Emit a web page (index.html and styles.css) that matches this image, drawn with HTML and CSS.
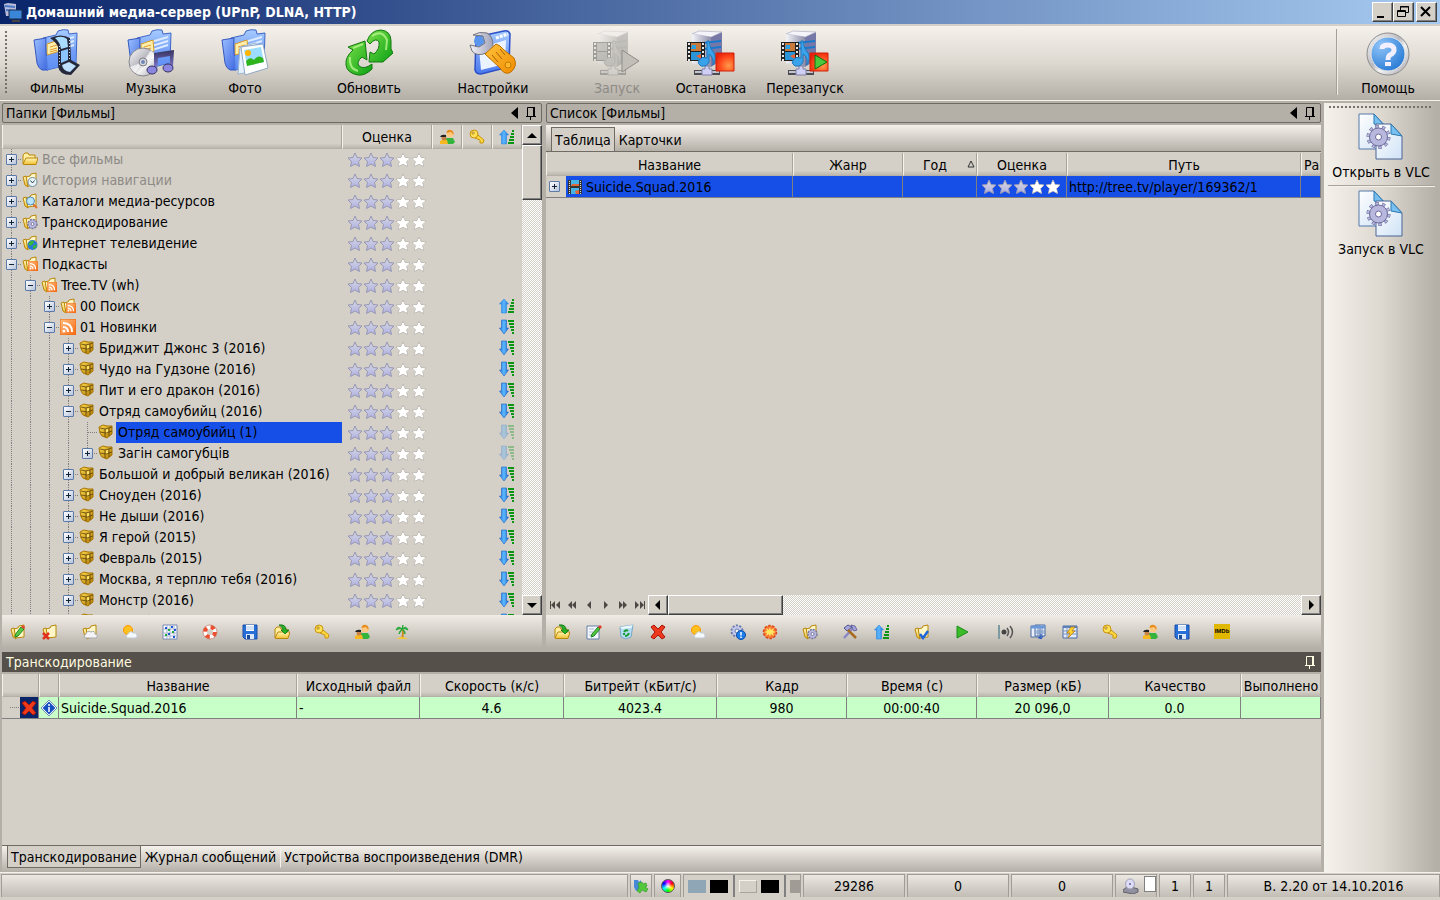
FILE: index.html
```html
<!DOCTYPE html>
<html lang="ru">
<head>
    <meta charset="UTF-8">
    <meta name="viewport" content="width=device-width, initial-scale=1.0">
    <title>Домашний медиа-сервер (UPnP, DLNA, HTTP)</title>
    <link rel="stylesheet" href="styles.css">
</head>
<body>

<!-- Общий набор иконок -->
<svg class="sprite" aria-hidden="true">
    <defs>
        <linearGradient id="gBlue" x1="0" y1="0" x2="0" y2="1"><stop offset="0" stop-color="#a8ccff"/><stop offset="1" stop-color="#4a78ee"/></linearGradient>
        <linearGradient id="gBlue2" x1="0" y1="0" x2="1" y2="1"><stop offset="0" stop-color="#9cc0ff"/><stop offset="1" stop-color="#3c66e0"/></linearGradient>
        <linearGradient id="gGreen" x1="0" y1="0" x2="1" y2="1"><stop offset="0" stop-color="#7be04a"/><stop offset="1" stop-color="#0aa014"/></linearGradient>
        <linearGradient id="gGrey" x1="0" y1="0" x2="1" y2="0"><stop offset="0" stop-color="#f4f4fa"/><stop offset="1" stop-color="#8e8fa8"/></linearGradient>
        <linearGradient id="gDisc" x1="0" y1="0" x2="1" y2="1"><stop offset="0" stop-color="#ffffff"/><stop offset="0.45" stop-color="#b9b9c0"/><stop offset="0.6" stop-color="#f4f4f4"/><stop offset="1" stop-color="#a0a0a8"/></linearGradient>
        <linearGradient id="gNote" x1="0" y1="0" x2="0" y2="1"><stop offset="0" stop-color="#35325c"/><stop offset="1" stop-color="#8d86e0"/></linearGradient>
        <radialGradient id="gRed" cx="0.7" cy="0.7" r="0.8"><stop offset="0" stop-color="#ff9a4a"/><stop offset="0.6" stop-color="#ff4a1c"/><stop offset="1" stop-color="#e8200c"/></radialGradient>
        <radialGradient id="gHelp" cx="0.3" cy="0.25" r="0.9"><stop offset="0" stop-color="#90c4f8"/><stop offset="1" stop-color="#1e74d2"/></radialGradient>
        <linearGradient id="gOrange" x1="0" y1="0" x2="1" y2="1"><stop offset="0" stop-color="#ffc23c"/><stop offset="1" stop-color="#f08c00"/></linearGradient>
        <linearGradient id="gGold" x1="0" y1="0" x2="0" y2="1"><stop offset="0" stop-color="#fff6b8"/><stop offset="1" stop-color="#f0c030"/></linearGradient>
        <linearGradient id="gDoc" x1="0" y1="0" x2="1" y2="1"><stop offset="0" stop-color="#ffffff"/><stop offset="1" stop-color="#cfe2f6"/></linearGradient>
        <linearGradient id="gStar" x1="0" y1="0" x2="0" y2="1"><stop offset="0" stop-color="#d8d8e2"/><stop offset="1" stop-color="#aeb0e2"/></linearGradient>
        <linearGradient id="gArrow" x1="0" y1="0" x2="1" y2="0"><stop offset="0" stop-color="#2a80e0"/><stop offset="0.5" stop-color="#5cb8ff"/><stop offset="1" stop-color="#1c6cd0"/></linearGradient>
        <linearGradient id="gRss" x1="0" y1="0" x2="1" y2="1"><stop offset="0" stop-color="#ffc080"/><stop offset="1" stop-color="#f86a14"/></linearGradient>
        <linearGradient id="gChest" x1="0" y1="0" x2="1" y2="1"><stop offset="0" stop-color="#ffdc50"/><stop offset="1" stop-color="#b07800"/></linearGradient>
    </defs>

    <!-- большие иконки 48x48 -->
    <symbol id="bigFolder" viewBox="0 0 48 48">
        <path d="M10 9 23 6 25 2 Q30 0 35 1 L36 5 44 4 43 34 14 41Z" fill="url(#gBlue)" stroke="#3d66c8"/>
        <path d="M24 13 41 8M25 17 41 12M25 21 41 16" stroke="#dcebff" stroke-width="2"/>
        <path d="M14 15 26 11 27 22 14 26Z" fill="#ffefad" stroke="#d69a20"/>
        <path d="M17 18 24 16M17 21 24 19M17 23 24 21" stroke="#e09a30"/>
        <path d="M1 11 13 9 Q12 22 15 41 L9 41 Q5 39 4 34Z" fill="url(#gBlue2)" stroke="#3558c0"/>
        <path d="M13 27 Q28 22 43 21 L43 34 14 41Z" fill="#6d9cf8" opacity=".6"/>
    </symbol>
    <symbol id="films" viewBox="0 0 48 48">
        <use href="#bigFolder"/>
        <path d="M17 9 Q28 4 37 9 L38 31 47 36 38 46 Q26 46 25 37 L25 18 Q23 13 17 9Z" fill="#24283a"/>
        <path d="M22 9 Q29 6 34 10 L35 18 28 20 Q27 13 22 9Z" fill="#a9dcff"/>
        <path d="M28 22 35 20 35 31 28 34Z" fill="#8cc4ff"/>
        <path d="M29 36 36 33 43 37 37 43 Q30 42 29 36Z" fill="#bfe0ff"/>
        <path d="M26.500 17V37M36.500 11V31" stroke="#d0dcf0" stroke-dasharray="1 2"/>
    </symbol>
    <symbol id="music" viewBox="0 0 48 48">
        <use href="#bigFolder"/>
        <circle cx="16" cy="33" r="14" fill="url(#gDisc)" stroke="#85858c"/>
        <path d="M16 33 24 21 A14 14 0 0 1 29 28ZM16 33 8 44 A14 14 0 0 1 3 38Z" fill="#fff" opacity=".7"/>
        <circle cx="16" cy="33" r="4" fill="#d8d8de" stroke="#7d7d86"/><circle cx="16" cy="33" r="2" fill="#6f88b8"/>
        <path d="M27 24 47 21 46 38 43 38 43 27 31 29 30 42 27 42Z" fill="url(#gNote)"/>
        <ellipse cx="25" cy="41" rx="5" ry="4" fill="#8d86e0" stroke="#35325c"/><ellipse cx="41" cy="39" rx="5" ry="4" fill="#8d86e0" stroke="#35325c"/>
    </symbol>
    <symbol id="photo" viewBox="0 0 48 48">
        <use href="#bigFolder"/>
        <path d="M19 18 35 14 37 42 17 45Z" fill="#e4f0fc" stroke="#9ab4d0"/>
        <path d="M20 18 42 15 47 39 24 46Z" fill="#fff" stroke="#90a8c4"/>
        <path d="M23 21 40 18 43 33 26 37Z" fill="#9cdcfc"/>
        <path d="M25 32 Q29 27 33 31 Q37 25 42 29 L43 33 26 37Z" fill="#30b41c"/>
        <circle cx="27" cy="24" r="3" fill="#ffb400"/>
    </symbol>
    <symbol id="refresh" viewBox="0 0 48 48">
        <g fill="url(#gGreen)" stroke="#11780e" stroke-linejoin="round">
            <path d="M3 18 20 12 22 31 17 28 Q11 33 14 37 Q19 41 27 35 L27 40 Q20 47 13 46 Q2 44 1 36 Q0 28 8 21Z"/>
            <path d="M22 12 Q26 1 36 1 Q46 2 46 12 L46 20 48 24 38 33 24 33 25 23 29 25 Q35 20 34 13 Q31 8 25 15Z"/>
        </g>
        <path d="M5 28Q4 40 13 42M27 7Q37 0 42 11L41 21M8 19 18 15" fill="none" stroke="#b5f58c" stroke-width="2" opacity=".8"/>
    </symbol>
    <symbol id="settings" viewBox="0 0 48 48">
        <path d="M7 8 35 2 Q40 1 41 5 L40 38 12 45 Q7 45 6 41Z" fill="url(#gBlue)" stroke="#2c50c8" stroke-width="1.500"/>
        <path d="M10 19 37 11 36 35 12 41Z" fill="#eaf3ff"/>
        <path d="M27 9 39 5" stroke="#fff" stroke-width="3" stroke-dasharray="3 1"/>
        <circle cx="10" cy="12" r="5" fill="#5a96f0"/>
        <path d="M4 6 Q10 2 18 4 Q24 7 24 17 L29 22 21 30 17 24 Q8 28 3 22 L1 16 10 18 16 14 14 7Z" fill="url(#gGrey)" stroke="#74747c"/>
        <path d="M16 25 27 15 Q31 16 35 21 L45 29 Q49 37 42 43 Q36 47 31 39Z" fill="url(#gOrange)" stroke="#bd7200"/>
        <path d="M23 26 29 33M27 23 33 30M31 20 36 26" stroke="#a96000"/>
        <circle cx="39" cy="36" r="3" fill="#ffb72c" stroke="#c27a00"/>
    </symbol>
    <symbol id="server" viewBox="0 0 48 48">
        <path d="M5 5 12 2 35 3 35 31 24 38 5 34Z" fill="#dcdce6"/>
        <path d="M24 8 35 3 35 31 24 38Z" fill="#7678a8"/>
        <path d="M5 5 12 2 35 3 24 8Z" fill="#f4f4fa" stroke="#a8a8bc" stroke-width=".6"/>
        <path d="M5 5 24 8 24 38 5 34Z" fill="url(#gGrey)"/>
        <path d="M16 14 34 12M16 20 34 18" stroke="#1a78cc" stroke-width="2"/>
        <path d="M0 13H18V32H0Z" fill="#222"/>
        <path d="M4 14H14V22H4Z" fill="#c87a3c"/><path d="M4 23H14V31H4Z" fill="#2a94d8"/>
        <path d="M5 16H9V20H4Z" fill="#2aa0e4"/><path d="M9 27 14 25V30Z" fill="#f06030"/>
        <path d="M2 14V32M16 14V32" stroke="#e8e8e8" stroke-width="2" stroke-dasharray="2 2"/>
        <path d="M7 41H33V46H7Z" fill="#4c4c54"/><path d="M8 43H32" stroke="#c4c4cc" stroke-width="2"/>
        <path d="M18 37H22V40H25V46H15V40H18Z" fill="#cfcff4" stroke="#8080a8"/>
        <path d="M20 12 22 12 Q23 20 27 24 Q30 29 26 36 Q27 28 22 25 L22 33 Q20 38 14 37 Q10 35 12 31 Q15 27 20 29Z" fill="#3aa2ea" stroke="#1c78bc"/>
    </symbol>
    <symbol id="serverStart" viewBox="0 0 48 48"><g class="faded"><use href="#server"/></g><path d="M29 21 46 32 29 43Z" fill="#c2bfb8" stroke="#8f8c86"/></symbol>
    <symbol id="serverStop" viewBox="0 0 48 48"><use href="#server"/><path d="M29 24H47V42H29Z" fill="url(#gRed)" stroke="#d02008"/></symbol>
    <symbol id="serverRestart" viewBox="0 0 48 48"><use href="#server"/><path d="M29 24H47V42H29Z" fill="url(#gRed)" stroke="#d02008"/><path d="M34 26 46 33 34 40Z" fill="#4cc83c" stroke="#0c7010"/></symbol>
    <symbol id="help" viewBox="0 0 48 48">
        <circle cx="24" cy="25" r="21" fill="url(#gDisc)" stroke="#8d8d8d"/>
        <circle cx="24" cy="25" r="17" fill="url(#gHelp)" stroke="#e8e8e8"/>
        <path d="M18 20Q18 16 23.500 16Q30 16 30 21Q30 24 26 26Q24 27 24 31" fill="none" stroke="#f2f0ff" stroke-width="5"/>
        <path d="M21 33H27V37H21Z" fill="#f2f0ff"/>
    </symbol>
    <symbol id="vlcDoc" viewBox="0 0 48 48">
        <path d="M2 1H17L28 13V36H2Z" fill="url(#gDoc)" stroke="#5578a8"/>
        <path d="M17 1 28 13 17 11Z" fill="#78c0f0" stroke="#2a78b0"/>
        <path d="M19 11H34L45 23V46H19Z" fill="url(#gDoc)" stroke="#4a6496"/>
        <path d="M34 11 45 23 34 21Z" fill="#78c0f0" stroke="#2a78b0"/>
        <circle cx="21.500" cy="24" r="10.500" fill="none" stroke="#6a6898" stroke-width="3" stroke-dasharray="3.300 3.300"/>
        <circle cx="21.500" cy="24" r="9" fill="#b8b8de" stroke="#6a6898"/>
        <circle cx="21.500" cy="24" r="10.500" fill="none" stroke="#b8b8de" stroke-width="2" stroke-dasharray="2.300 4.300" stroke-dashoffset="-.5"/>
        <circle cx="21.500" cy="24" r="3" fill="#fff" stroke="#6a6898"/>
    </symbol>

    <!-- маленькие иконки 16x16 -->
    <symbol id="app" viewBox="0 0 20 20">
        <path d="M1 2 5 1 13 2V14H3Z" fill="#b8bcd8"/><path d="M2 4 12 5M3 8 12 9" stroke="#4a78c8" stroke-width="2"/><path d="M6 8H19V17H6Z" fill="#3a86d8" stroke="#1c2c50"/><path d="M9 19H17" stroke="#444" stroke-width="2"/>
    </symbol>
    <symbol id="star" viewBox="0 0 16 16"><path d="M8 1 10 5.500 15 6 11.500 9.500 12.500 14.500 8 12 3.500 14.500 4.500 9.500 1 6 6 5.500Z"/></symbol>
    <symbol id="stars" viewBox="0 0 80 16">
        <g fill="url(#gStar)" stroke="#9898b4"><use href="#star" width="16" height="16"/><use href="#star" x="16" width="16" height="16"/><use href="#star" x="32" width="16" height="16"/></g>
        <g fill="#fff" stroke="#bdbab5"><use href="#star" x="48" width="16" height="16"/><use href="#star" x="64" width="16" height="16"/></g>
        <path d="M56 3 57.500 6.500 61.500 7 58.500 9.500 59.500 13 56 11 52.500 13 53.500 9.500 50.500 7 54.500 6.500ZM72 3 73.500 6.500 77.500 7 74.500 9.500 75.500 13 72 11 68.500 13 69.500 9.500 66.500 7 70.500 6.500Z" fill="#fff" stroke="#fff"/>
    </symbol>
    <symbol id="openFolder" viewBox="0 0 16 16"><path d="M1 13V4L3 2H6L7 4H13V7" fill="#ffeea0" stroke="#b8860b"/><path d="M1 13 4 7H16L14 13.500H2Z" fill="url(#gGold)" stroke="#b8860b"/></symbol>
    <symbol id="folder" viewBox="0 0 16 16"><path d="M4 5 8 4 9 2 14 1V13L5 14Z" fill="#fff7c8" stroke="#b8860b"/><path d="M1 5 4 4 6 15 3 13Z" fill="url(#gGold)" stroke="#b8860b"/></symbol>
    <symbol id="folderTime" viewBox="0 0 16 16"><use href="#folder"/><circle cx="10.500" cy="10" r="4.500" fill="#e8f4f8" stroke="#6c8ca0"/><path d="M8.500 8.500 10.500 11 12.500 8.500" fill="none" stroke="#345"/></symbol>
    <symbol id="folderFind" viewBox="0 0 16 16"><use href="#folder"/><path d="M11 11 15 15" stroke="#e07030" stroke-width="2"/><circle cx="8.500" cy="8" r="4" fill="#b8e4fc" stroke="#5088b8"/></symbol>
    <symbol id="folderGear" viewBox="0 0 16 16"><use href="#folder"/><circle cx="10.500" cy="10" r="4.500" fill="#b9b9e0" stroke="#77779c" stroke-width="1.500" stroke-dasharray="2 1"/><circle cx="10.500" cy="10" r="1.500" fill="#fff" stroke="#77779c"/></symbol>
    <symbol id="folderWeb" viewBox="0 0 16 16"><use href="#folder"/><circle cx="10.500" cy="10" r="5" fill="#2a78d8"/><path d="M6 9Q9 4 12 6L11 9 8 11ZM11 11 15 9 14 13 11 14Z" fill="#38b838"/></symbol>
    <symbol id="rssBox" viewBox="0 0 16 16"><path d="M0 0H16V16H0Z" fill="url(#gRss)" stroke="#e86810"/><g fill="none" stroke="#fff" stroke-width="2"><path d="M3 8Q8 8 8 13M3 4Q12 4 12 13"/></g><circle cx="4" cy="12" r="1.500" fill="#fff"/></symbol>
    <symbol id="folderRss" viewBox="0 0 16 16"><use href="#folder"/><use href="#rssBox" x="6" y="5" width="10" height="10"/></symbol>
    <symbol id="chest" viewBox="0 0 16 16"><path d="M1 3 5 1 9 2 14 2 14 10 9 14 4 12 2 9Z" fill="url(#gChest)" stroke="#a87400"/><path d="M2 4 7 5 14 3M7 5V13M2 8 8 9 14 7M11 4V12" fill="none" stroke="#5c430c" stroke-width=".8"/><path d="M8 5.500 10 5V8L8 8.500Z" fill="#ffe468"/></symbol>
    <symbol id="sortUp" viewBox="0 0 16 16"><path d="M5 1 9.500 6H7.500V15H2.500V6H.5Z" fill="url(#gArrow)" stroke="#2a88e0" stroke-width=".6"/><path d="M13 2H15M12 5H15M11 8H15M10 11H15M9 14H15" stroke="#0c9414" stroke-width="2"/></symbol>
    <symbol id="sortDown" viewBox="0 0 16 16"><path d="M2.500 1H7.500V9H9.500L5 15 .5 9H2.500Z" fill="url(#gArrow)" stroke="#1c60c0" stroke-width=".6"/><path d="M9 2H15M10 5H15M11 8H15M12 11H15M13 14H15" stroke="#0c9414" stroke-width="2"/></symbol>
    <symbol id="users" viewBox="0 0 16 16"><path d="M6 15 7 9H14L16 13 14 15Z" fill="#34b43c"/><circle cx="11" cy="5" r="3.500" fill="#ffc880"/><path d="M7.500 4Q8 0 12 1 15 2 14.500 6L12 3Z" fill="#e88c1c"/><path d="M1 15V12L3 11H8L9 15Z" fill="#f8b820"/><circle cx="5" cy="9" r="2.500" fill="#c88448"/><path d="M1 8Q2 5 7 6L7 8 4 8Z" fill="#222"/></symbol>
    <symbol id="key" viewBox="0 0 16 16"><path d="M6 9 9 6 15 11 14 14 11 14 11 11Z" fill="#ffd840" stroke="#c89410"/><circle cx="5" cy="5" r="4" fill="#ffe258" stroke="#c89410"/><circle cx="4" cy="4" r="1.200" fill="#c8c4bc" stroke="#c89410"/></symbol>
    <symbol id="folderEdit" viewBox="0 0 16 16"><use href="#folder"/><path d="M5 11 11 3 14 5 8 12 5 13Z" fill="#58cc48" stroke="#208020"/><path d="M11 3 13 1 15 3 14 5Z" fill="#e84830"/></symbol>
    <symbol id="folderDel" viewBox="0 0 16 16"><use href="#folder"/><path d="M1 9 7 15M7 9 1 15" stroke="#e03020" stroke-width="2.500"/></symbol>
    <symbol id="folderCloud" viewBox="0 0 16 16"><use href="#folder"/><path d="M3 14Q1 11 4 10 5 6 9 8 13 6 13 10 17 11 14 14Z" fill="#f4f4f8" stroke="#aaa"/></symbol>
    <symbol id="weather" viewBox="0 0 16 16"><circle cx="6" cy="6" r="4.500" fill="#ffc020" stroke="#ff9800"/><path d="M5 14Q3 11 6 10 8 6 11 9 15 8 15 11 16 14 13 14Z" fill="#f4f8ff" stroke="#c4c8d0"/></symbol>
    <symbol id="grid" viewBox="0 0 16 16"><path d="M1 1H15V15H1Z" fill="#fff" stroke="#7888b0"/><path d="M1 5H15M1 9H15M1 12H15M5 1V15M8 1V15M12 1V15" stroke="#a8b4d0"/><path d="M3 3H5V5H3ZM9 2H11V4H9ZM6 9H8V11H6ZM12 5H14V7H12ZM11 12H13V14H11Z" fill="#2058d8"/><path d="M6 5H8V7H6ZM10 7H12V9H10ZM3 10H5V12H3Z" fill="#28a838"/></symbol>
    <symbol id="ring" viewBox="0 0 16 16"><circle cx="8" cy="8" r="5" fill="none" stroke="#fff" stroke-width="4"/><circle cx="8" cy="8" r="5" fill="none" stroke="#ec5030" stroke-width="4" stroke-dasharray="4 3.850"/><circle cx="8" cy="8" r="7" fill="none" stroke="#c06048" stroke-width=".6"/></symbol>
    <symbol id="floppy" viewBox="0 0 16 16"><path d="M1 1H15V15H3L1 13Z" fill="#2870d8" stroke="#1a4ca8"/><path d="M4 1H12V7H4Z" fill="#fff"/><path d="M4 3H12M4 5H12" stroke="#a8c4e8"/><path d="M4 10H12V15H4Z" fill="#dce8f8"/><path d="M5 11H8V15H5Z" fill="#1c4c98"/></symbol>
    <symbol id="folderIn" viewBox="0 0 16 16"><use href="#openFolder" y="1"/><path d="M5 1Q12 0 12 6H15L11 10 7 6H9Q9 3 5 1Z" fill="#28b028" stroke="#0c7410" stroke-width=".8"/></symbol>
    <symbol id="palm" viewBox="0 0 16 16"><path d="M8 5Q10 9 8 14" fill="none" stroke="#c88c28" stroke-width="2"/><path d="M8 5Q4 1 2 6 5 4 8 5 5 7 5 10 7 7 8 5 12 1 14 6 11 4 8 5 12 7 11 10 10 7 8 5L9 1Z" fill="#28a838" stroke="#28a838"/><path d="M2 15Q8 11 14 15Z" fill="#f4c830"/></symbol>
    <symbol id="docEdit" viewBox="0 0 16 16"><path d="M1 2H13V15H1Z" fill="#f4f8ff" stroke="#6880a8"/><path d="M3 5H8M3 8H7M3 11H6" stroke="#a8b8d0"/><path d="M5 13 6 10 12 3 14 5 8 12Z" fill="#50c840" stroke="#208020"/><path d="M12 3 14 1 16 3 14 5Z" fill="#e03828"/></symbol>
    <symbol id="recycle" viewBox="0 0 16 16"><path d="M2 3 15 1 13 13 8 15 3 13Z" fill="#b4dcf4" stroke="#78a8c8"/><path d="M2 3 15 1 13 4 4 5Z" fill="#eaf8ff"/><path d="M6 8Q8 5 10 7M11 9Q10 12 7 12M6 11V9" fill="none" stroke="#1c9c30" stroke-width="2"/></symbol>
    <symbol id="cross" viewBox="0 0 16 16"><path d="M1 3 4 1 8 5 12 1 15 3 11 8 15 13 12 15 8 11 4 15 1 13 5 8Z" fill="#ee3a1c" stroke="#a81408"/></symbol>
    <symbol id="gearInfo" viewBox="0 0 16 16"><circle cx="7" cy="7" r="5.500" fill="#c4c8e8" stroke="#6878b0" stroke-width="2" stroke-dasharray="2 1.450"/><circle cx="7" cy="7" r="4.500" fill="#c4c8e8"/><circle cx="7" cy="7" r="2" fill="#fff" stroke="#6878b0"/><circle cx="11" cy="11" r="4.500" fill="#1c7ce8" stroke="#0c50a8"/><path d="M11 8V11.500M11 12.500V14" stroke="#fff" stroke-width="1.500"/></symbol>
    <symbol id="burst" viewBox="0 0 16 16"><circle cx="8" cy="8" r="6.500" fill="#f87838" stroke="#d84818" stroke-width="1.500" stroke-dasharray="2.500 1.500"/><path d="M8 3 9 6 12 4 11 7 14 8 11 9 12 12 9 10 8 13 7 10 4 12 5 9 2 8 5 7 4 4 7 6Z" fill="#ffe860"/></symbol>
    <symbol id="tools" viewBox="0 0 16 16"><path d="M2 14 11 4" stroke="#8888c8" stroke-width="2.500"/><path d="M9 1 13 2 15 6 12 7Z" fill="#a8a8dc" stroke="#6868a0"/><path d="M2 4 6 1 10 3 5 7Z" fill="#a8a8dc" stroke="#50508c"/><path d="M6 6 14 14" stroke="#a86c20" stroke-width="2.500"/></symbol>
    <symbol id="folderOk" viewBox="0 0 16 16"><use href="#folder"/><path d="M6 10 9 14 14 7" fill="none" stroke="#1c64d8" stroke-width="2.500"/></symbol>
    <symbol id="play" viewBox="0 0 16 16"><path d="M3 2 14 8 3 14Z" fill="#3cbc28" stroke="#1c8c18"/></symbol>
    <symbol id="sound" viewBox="0 0 16 16"><path d="M1 1V15" stroke="#7a9ca0" stroke-width="2"/><circle cx="6" cy="8" r="2.500" fill="#444"/><path d="M9 4Q12 8 9 12M12 2Q17 8 12 14" fill="none" stroke="#555" stroke-width="1.500"/></symbol>
    <symbol id="tableDown" viewBox="0 0 16 16"><path d="M1 2H10V13H1ZM5 1H15V12H5Z" fill="#eaf0fc" stroke="#4868a0"/><path d="M1 3H15" stroke="#6c98d8" stroke-width="3"/><path d="M5 7H15M5 9H15M8 4V12M12 4V12" stroke="#7894c0"/><path d="M8 14H11V10M9 13 11 15 13 12" fill="none" stroke="#1c50c0"/></symbol>
    <symbol id="tableFlash" viewBox="0 0 16 16"><path d="M1 2H15V14H1Z" fill="#e4ecfa" stroke="#4868a0"/><path d="M1 3H15" stroke="#5880b8" stroke-width="2"/><path d="M1 7H15M1 10H15M5 3V14" stroke="#7894c0"/><path d="M9 3 13 3 10 7H13L6 14 8 9H5Z" fill="#ffd430" stroke="#b87818" stroke-width=".8"/></symbol>
    <symbol id="filmClip" viewBox="0 0 16 16"><path d="M1 1H15V15H1Z" fill="#333"/><path d="M4 1H12V7H4ZM4 9H12V15H4Z" fill="#48b4e4"/><path d="M5 5H12V7H4ZM8 12 12 11V15H9Z" fill="#e06838"/><path d="M2.500 2V15M13.500 2V15" stroke="#ddd" stroke-dasharray="1 1"/></symbol>
    <symbol id="info" viewBox="0 0 16 16"><path d="M8 0 16 8 8 16 0 8Z" fill="#fff" stroke="#7090b8"/><path d="M8 3 13 8 8 13 3 8Z" fill="#1850c0" stroke="#1850c0" stroke-width="2"/><path d="M8 4V6M8 7V12" stroke="#fff" stroke-width="1.500"/></symbol>
    <symbol id="puzzle" viewBox="0 0 16 16"><path d="M1 2H5L6 4 8 2V10L3 13 1 9Z" fill="#4888d8"/><path d="M5 5 9 4 10 6 13 5 14 8 12 9 15 11 13 14 9 12 7 15 4 13 6 10Z" fill="#54c83c" stroke="#289420" stroke-width=".6"/></symbol>
    <symbol id="cdDrive" viewBox="0 0 16 16"><path d="M0 12 5 8 15 11V14L10 16 0 14Z" fill="#9090a0" stroke="#606068"/><ellipse cx="7" cy="6" rx="4.500" ry="5" fill="#dcdcf4" stroke="#a0a0b8"/><circle cx="7" cy="6" r="1" fill="#6860a0"/></symbol>
    <symbol id="pin" viewBox="0 0 12 14"><path d="M2.500 10V1.500H8.500M1 10.500H11M5.500 10V14" fill="none" stroke="currentColor"/><path d="M9 1V10" stroke="currentColor" stroke-width="2"/></symbol>
    <symbol id="back" viewBox="0 0 12 14"><path d="M9 1V13L2 7Z" fill="currentColor"/></symbol>
    <symbol id="triUp" viewBox="0 0 10 10"><path d="M0 8H10L5 3Z"/></symbol>
    <symbol id="triDown" viewBox="0 0 10 10"><path d="M0 3H10L5 8Z"/></symbol>
    <symbol id="triLeft" viewBox="0 0 10 10"><path d="M7 0V10L2 5Z"/></symbol>
    <symbol id="triRight" viewBox="0 0 10 10"><path d="M3 0V10L8 5Z"/></symbol>
    <symbol id="nFirst" viewBox="0 0 10 10"><path d="M0 1H1V9H0ZM5 1V9L1 5ZM10 1V9L6 5Z"/></symbol>
    <symbol id="nPrevs" viewBox="0 0 10 10"><path d="M5 1V9L1 5ZM9 1V9L5 5Z"/></symbol>
    <symbol id="nPrev" viewBox="0 0 10 10"><path d="M7 1V9L3 5Z"/></symbol>
    <symbol id="nNext" viewBox="0 0 10 10"><path d="M3 1V9L7 5Z"/></symbol>
    <symbol id="nNexts" viewBox="0 0 10 10"><path d="M1 1V9L5 5ZM5 1V9L9 5Z"/></symbol>
    <symbol id="nLast" viewBox="0 0 10 10"><path d="M0 1V9L4 5ZM5 1V9L9 5ZM9 1H10V9H9Z"/></symbol>
</svg>

<header class="titlebar">
    <svg class="app-icon"><use href="#app"/></svg>
    <h1>Домашний медиа-сервер (UPnP, DLNA, HTTP)</h1>
    <button class="win-btn" aria-label="Свернуть"><svg viewBox="0 0 16 16"><path d="M3 13H10" stroke="#000" stroke-width="2"/></svg></button>
    <button class="win-btn" aria-label="Восстановить"><svg viewBox="0 0 16 16"><path d="M5.500 7V2.500H13.500V8.500H11M5 3H14M2.500 6.500H10.500V12.500H2.500ZM2 7.500H11" fill="none" stroke="#000"/></svg></button>
    <button class="win-btn close" aria-label="Закрыть"><svg viewBox="0 0 16 16"><path d="M3 3 12 12M12 3 3 12" stroke="#000" stroke-width="2"/></svg></button>
</header>

<nav class="main-toolbar">
    <span class="grip"></span>
    <button class="big-btn"><svg><use href="#films"/></svg>Фильмы</button>
    <button class="big-btn"><svg><use href="#music"/></svg>Музыка</button>
    <button class="big-btn"><svg><use href="#photo"/></svg>Фото</button>
    <button class="big-btn group"><svg><use href="#refresh"/></svg>Обновить</button>
    <button class="big-btn group"><svg><use href="#settings"/></svg>Настройки</button>
    <button class="big-btn group" disabled><svg><use href="#serverStart"/></svg>Запуск</button>
    <button class="big-btn"><svg><use href="#serverStop"/></svg>Остановка</button>
    <button class="big-btn"><svg><use href="#serverRestart"/></svg>Перезапуск</button>
    <span class="help-group"><button class="big-btn"><svg><use href="#help"/></svg>Помощь</button></span>
</nav>

<div class="workspace">
    <main class="panels">
        <div class="top-panels">
            <!-- Дерево папок -->
            <section class="panel folders">
                <h2 class="panel-title">Папки [Фильмы]<svg><use href="#back"/></svg><svg><use href="#pin"/></svg></h2>
                <div class="tree-box">
                    <div class="tree-scroll">
                        <table class="grid tree">
                            <colgroup><col><col class="c-rate"><col class="c-icon"><col class="c-icon"><col class="c-icon"></colgroup>
                            <thead>
                                <tr><th></th><th>Оценка</th><th><svg class="ico"><use href="#users"/></svg></th><th><svg class="ico"><use href="#key"/></svg></th><th><svg class="ico"><use href="#sortUp"/></svg></th></tr>
                            </thead>
                            <tbody id="treeRows"></tbody>
                        </table>
                    </div>
                    <div class="vscroll">
                        <button class="sb" aria-label="Вверх"><svg><use href="#triUp"/></svg></button>
                        <span class="thumb"></span>
                        <button class="sb end" aria-label="Вниз"><svg><use href="#triDown"/></svg></button>
                    </div>
                </div>
                <div class="icon-bar">
                    <button><svg><use href="#folderEdit"/></svg></button>
                    <button><svg><use href="#folderDel"/></svg></button>
                    <button class="gap"><svg><use href="#folderCloud"/></svg></button>
                    <button class="gap"><svg><use href="#weather"/></svg></button>
                    <button class="gap"><svg><use href="#grid"/></svg></button>
                    <button class="gap"><svg><use href="#ring"/></svg></button>
                    <button class="gap"><svg><use href="#floppy"/></svg></button>
                    <button><svg><use href="#folderIn"/></svg></button>
                    <button class="gap"><svg><use href="#key"/></svg></button>
                    <button class="gap"><svg><use href="#users"/></svg></button>
                    <button class="gap"><svg><use href="#palm"/></svg></button>
                </div>
            </section>

            <!-- Список файлов -->
            <section class="panel files">
                <h2 class="panel-title">Список [Фильмы]<svg><use href="#back"/></svg><svg><use href="#pin"/></svg></h2>
                <div class="tabs top">
                    <button class="tab active">Таблица</button>
                    <button class="tab">Карточки</button>
                </div>
                <div class="list-box">
                    <table class="grid list">
                        <colgroup><col class="c-name"><col class="c-genre"><col class="c-year"><col class="c-rate"><col class="c-path"><col></colgroup>
                        <thead>
                            <tr><th>Название</th><th>Жанр</th><th class="sorted">Год<svg viewBox="0 0 8 8"><path d="M1 7H7L4 1Z" fill="none" stroke="#333"/></svg></th><th>Оценка</th><th>Путь</th><th>Размер</th></tr>
                        </thead>
                        <tbody>
                            <tr>
                                <td class="first"><div class="file-name"><button class="exp plus" aria-label="Развернуть"></button><span><svg class="ico"><use href="#filmClip"/></svg>Suicide.Squad.2016</span></div></td>
                                <td></td><td></td><td><svg class="stars"><use href="#stars"/></svg></td><td>http://tree.tv/player/169362/1</td><td></td>
                            </tr>
                        </tbody>
                    </table>
                </div>
                <div class="hscroll">
                    <div class="record-nav">
                        <button><svg><use href="#nFirst"/></svg></button>
                        <button><svg><use href="#nPrevs"/></svg></button>
                        <button><svg><use href="#nPrev"/></svg></button>
                        <button><svg><use href="#nNext"/></svg></button>
                        <button><svg><use href="#nNexts"/></svg></button>
                        <button><svg><use href="#nLast"/></svg></button>
                    </div>
                    <button class="sb" aria-label="Влево"><svg><use href="#triLeft"/></svg></button>
                    <span class="thumb"></span>
                    <button class="sb end" aria-label="Вправо"><svg><use href="#triRight"/></svg></button>
                </div>
                <div class="icon-bar">
                    <button><svg><use href="#folderIn"/></svg></button>
                    <button><svg><use href="#docEdit"/></svg></button>
                    <button><svg><use href="#recycle"/></svg></button>
                    <button><svg><use href="#cross"/></svg></button>
                    <button class="gap"><svg><use href="#weather"/></svg></button>
                    <button class="gap"><svg><use href="#gearInfo"/></svg></button>
                    <button><svg><use href="#burst"/></svg></button>
                    <button class="gap"><svg><use href="#folderGear"/></svg></button>
                    <button class="gap"><svg><use href="#tools"/></svg></button>
                    <button><svg><use href="#sortUp"/></svg></button>
                    <button class="gap"><svg><use href="#folderOk"/></svg></button>
                    <button class="gap"><svg><use href="#play"/></svg></button>
                    <button class="gap wide"><svg><use href="#sound"/></svg></button>
                    <button><svg><use href="#tableDown"/></svg></button>
                    <button><svg><use href="#tableFlash"/></svg></button>
                    <button class="gap"><svg><use href="#key"/></svg></button>
                    <button class="gap"><svg><use href="#users"/></svg></button>
                    <button><svg><use href="#floppy"/></svg></button>
                    <button class="gap"><span class="imdb">IMDb</span></button>
                </div>
            </section>
        </div>

        <!-- Транскодирование -->
        <section class="panel transcode">
            <h2 class="panel-title dark">Транскодирование<svg><use href="#pin"/></svg></h2>
            <div class="job-box">
                <table class="grid jobs">
                    <colgroup><col class="j-state"><col class="j-info"><col class="j-name"><col class="j-src"><col class="j-speed"><col class="j-rate"><col class="j-frame"><col class="j-frame"><col class="j-size"><col class="j-size"><col></colgroup>
                    <thead>
                        <tr><th></th><th></th><th>Название</th><th>Исходный файл</th><th>Скорость (к/с)</th><th>Битрейт (кБит/с)</th><th>Кадр</th><th>Время (с)</th><th>Размер (кБ)</th><th>Качество</th><th>Выполнено</th></tr>
                    </thead>
                    <tbody>
                        <tr>
                            <td class="state"><span><svg class="ico"><use href="#cross"/></svg></span></td>
                            <td class="mid"><svg class="ico"><use href="#info"/></svg></td>
                            <td>Suicide.Squad.2016</td><td>-</td><td class="mid">4.6</td><td class="mid">4023.4</td><td class="mid">980</td><td class="mid">00:00:40</td><td class="mid">20 096,0</td><td class="mid">0.0</td><td></td>
                        </tr>
                    </tbody>
                </table>
            </div>
            <div class="tabs bottom">
                <button class="tab active">Транскодирование</button>
                <button class="tab">Журнал сообщений</button>
                <button class="tab split">Устройства воспроизведения (DMR)</button>
            </div>
        </section>
    </main>

    <aside class="sidebar">
        <span class="grip"></span>
        <button class="big-btn"><svg><use href="#vlcDoc"/></svg>Открыть в VLC</button>
        <hr>
        <button class="big-btn"><svg><use href="#vlcDoc"/></svg>Запуск в VLC</button>
    </aside>
</div>

<footer class="statusbar">
    <span class="cell fill"></span>
    <span class="cell s-plug"><svg class="ico"><use href="#puzzle"/></svg></span>
    <span class="cell s-wheel"><i class="wheel"></i></span>
    <span class="cell s-colors"><span><i class="sw blue"></i><i class="sw black"></i></span><span><i class="sw plain"></i><i class="sw black"></i></span><span><i class="sw grey"></i></span></span>
    <span class="cell s-num">29286</span>
    <span class="cell s-num">0</span>
    <span class="cell s-num">0</span>
    <span class="cell s-disc"><svg class="ico"><use href="#cdDrive"/></svg><i class="level"></i></span>
    <span class="cell s-one">1</span>
    <span class="cell s-one">1</span>
    <span class="cell s-ver">В. 2.20 от 14.10.2016</span>
</footer>

<script>
    // Узлы дерева: уровень, кнопка раскрытия, иконка, название, сортировка, классы
    const nodes = [
        [0, 'plus', 'openFolder', 'Все фильмы', '', 'muted'],
        [0, 'plus', 'folderTime', 'История навигации', '', 'muted'],
        [0, 'plus', 'folderFind', 'Каталоги медиа-ресурсов', ''],
        [0, 'plus', 'folderGear', 'Транскодирование', ''],
        [0, 'plus', 'folderWeb', 'Интернет телевидение', ''],
        [0, 'minus', 'folderRss', 'Подкасты', ''],
        [1, 'minus', 'folderRss', 'Tree.TV (wh)', ''],
        [2, 'plus', 'folderRss', '00 Поиск', 'sortUp'],
        [2, 'minus', 'rssBox', '01 Новинки', 'sortDown'],
        [3, 'plus', 'chest', 'Бриджит Джонс 3 (2016)', 'sortDown'],
        [3, 'plus', 'chest', 'Чудо на Гудзоне (2016)', 'sortDown'],
        [3, 'plus', 'chest', 'Пит и его дракон (2016)', 'sortDown'],
        [3, 'minus', 'chest', 'Отряд самоубийц (2016)', 'sortDown'],
        [4, '', 'chest', 'Отряд самоубийц (1)', 'sortDown', 'selected dim'],
        [4, 'plus', 'chest', 'Загін самогубців', 'sortDown', 'last dim'],
        [3, 'plus', 'chest', 'Большой и добрый великан (2016)', 'sortDown'],
        [3, 'plus', 'chest', 'Сноуден (2016)', 'sortDown'],
        [3, 'plus', 'chest', 'Не дыши (2016)', 'sortDown'],
        [3, 'plus', 'chest', 'Я герой (2015)', 'sortDown'],
        [3, 'plus', 'chest', 'Февраль (2015)', 'sortDown'],
        [3, 'plus', 'chest', 'Москва, я терплю тебя (2016)', 'sortDown'],
        [3, 'plus', 'chest', 'Монстр (2016)', 'sortDown'],
        [3, 'plus', 'chest', 'Волшебный (2016)', 'sortDown']
    ];

    document.getElementById('treeRows').innerHTML = nodes.map(([level, state, icon, title, sort, cls]) => `
        <tr class="${cls || ''}">
            <td><div class="node">
                ${'<i class="guide"></i>'.repeat(level)}
                <span class="joint">${state ? `<button class="exp ${state}" aria-label="${title}"></button>` : ''}</span>
                <svg class="ico"><use href="#${icon}"/></svg>
                <span class="caption">${title}</span>
            </div></td>
            <td><svg class="stars"><use href="#stars"/></svg></td>
            <td></td>
            <td></td>
            <td class="mid">${sort ? `<svg class="ico sort"><use href="#${sort}"/></svg>` : ''}</td>
        </tr>
    `).join('');
</script>

</body>
</html>
```
FILE: styles.css
```css
* {
    box-sizing: border-box;
}

body {
    margin: 0;
    height: 100vh;
    display: flex;
    flex-direction: column;
    overflow: hidden;
    background-color: #b4afa7;
    color: #000;
    font-family: "DejaVu Sans Condensed", "Noto Sans", sans-serif;
    font-size: 14px;
    line-height: 18px;
}

button {
    font: inherit;
    color: inherit;
    background: none;
    border: none;
    padding: 0;
    margin: 0;
}

svg {
    display: block;
    flex: none;
}

.sprite {
    position: absolute;
    width: 0;
    height: 0;
}

.ico {
    width: 16px;
    height: 16px;
}

.stars {
    width: 80px;
    height: 16px;
}

.faded {
    filter: grayscale(1);
    opacity: 0.35;
}

/* Заголовок окна */
.titlebar {
    display: flex;
    align-items: center;
    height: 24px;
    padding: 0 3px 0 3px;
    background: linear-gradient(90deg, #0a246a, #a6caf0);
}

.titlebar h1 {
    flex: 1;
    margin: 0 0 0 3px;
    color: #fff;
    font-size: 14px;
    font-weight: bold;
}

.app-icon {
    width: 20px;
    height: 20px;
}

.win-btn,
.sb,
.thumb {
    background-color: #d4d0c8;
    border: 1px solid;
    border-color: #fff #404040 #404040 #fff;
    box-shadow: inset -1px -1px #808080;
}

.win-btn {
    width: 21px;
    height: 20px;
    padding: 1px;
}

.win-btn.close {
    margin-left: 2px;
}

.win-btn svg {
    width: 16px;
    height: 16px;
}

/* Главная панель инструментов */
.main-toolbar {
    display: flex;
    height: 75px;
    margin-top: 2px;
    padding: 3px 5px 0 5px;
    background: linear-gradient(#f5f1eb, #ddd9d1 50%, #b3aea6);
    border-bottom: 1px solid #f5f1eb;
    box-shadow: 0 -2px #d4d0c8;
}

.grip {
    flex: none;
    width: 5px;
    height: 64px;
    margin-top: 2px;
    background: repeating-linear-gradient(#76716a 0 2px, transparent 2px 4px) 0 0 / 2px 100% no-repeat;
}

.big-btn {
    display: flex;
    flex-direction: column;
    align-items: center;
    gap: 2px;
    width: 94px;
    height: 68px;
    white-space: nowrap;
}

.big-btn svg {
    width: 48px;
    height: 48px;
}

.big-btn:disabled {
    color: #8d8a85;
}

.big-btn.group {
    margin-left: 30px;
}

.help-group {
    margin-left: auto;
    padding-left: 4px;
    height: 66px;
    border-left: 1px solid #a5a098;
    box-shadow: inset 1px 0 #f0ece6;
}

/* Рабочая область */
.workspace {
    flex: 1;
    min-height: 0;
    display: flex;
    gap: 3px;
    padding: 2px 2px 0 2px;
}

.panels {
    flex: 1;
    min-width: 0;
    display: flex;
    flex-direction: column;
}

.top-panels {
    flex: 1;
    min-height: 0;
    display: flex;
    gap: 4px;
}

.panel {
    display: flex;
    flex-direction: column;
    min-width: 0;
}

.folders {
    flex: 0 0 540px;
}

.files {
    flex: 1;
}

.panel-title {
    display: flex;
    flex: none;
    align-items: center;
    gap: 4px;
    height: 20px;
    margin: 0 0 2px 0;
    padding: 0 4px 0 3px;
    border: 1px solid #6f6a63;
    border-radius: 2px;
    font-size: 14px;
    font-weight: normal;
}

.panel-title svg {
    width: 12px;
    height: 14px;
}

.panel-title svg:first-of-type {
    margin-left: auto;
}

.panel-title.dark {
    background-color: #555049;
    border-color: #555049;
    border-radius: 0;
    color: #fffbe0;
}

/* Таблицы */
.grid {
    table-layout: fixed;
    border-collapse: separate;
    border-spacing: 0;
    width: 100%;
}

.grid th {
    height: 23px;
    padding: 1px 0 0 0;
    overflow: hidden;
    white-space: nowrap;
    font-weight: normal;
    text-align: center;
    background: linear-gradient(#d4d0c8 80%, #bcb8b0);
    border-left: 1px solid #f5f1eb;
    border-right: 1px solid #a8a49c;
    border-bottom: 1px solid #b4afa7;
}

.grid th svg.ico {
    margin: 0 auto;
}

.grid td {
    padding: 0 2px;
    white-space: nowrap;
    overflow: hidden;
}

.grid .mid {
    text-align: center;
}

.grid .mid .ico {
    margin: 0 auto;
}

.c-rate {
    width: 90px;
}

.c-icon {
    width: 30px;
}

.tree-box {
    flex: 1;
    min-height: 0;
    display: flex;
    background-color: #d4d0c8;
}

.tree-scroll {
    flex: 1;
    overflow: hidden;
}

.tree th {
    height: 24px;
    padding: 0;
}

.tree td {
    height: 21px;
    padding: 0;
}

.tree td .stars {
    margin-left: 5px;
}

.tree .node .ico {
    margin-bottom: 2px;
}

.tree .mid .sort {
    margin-bottom: 2px;
}

.node {
    display: flex;
    align-items: center;
    height: 21px;
    padding-left: 4px;
}

.guide,
.joint {
    flex: none;
    width: 19px;
    height: 21px;
    background: repeating-linear-gradient(#808080 0 1px, transparent 1px 2px) 5px 0 / 1px 100% no-repeat;
}

.joint {
    display: flex;
    align-items: center;
    width: 16px;
    background:
        repeating-linear-gradient(#808080 0 1px, transparent 1px 2px) 5px 0 / 1px 100% no-repeat,
        repeating-linear-gradient(90deg, #808080 0 1px, transparent 1px 2px) 6px 10px / 10px 1px no-repeat;
}

.last .joint {
    background-size: 1px 50%, 10px 1px;
}

.exp {
    flex: none;
    width: 11px;
    height: 11px;
    border: 1px solid #5c7ba8;
    border-radius: 1px;
}

.exp.plus {
    background:
        linear-gradient(#123, #123) center / 5px 1px no-repeat,
        linear-gradient(#123, #123) center / 1px 5px no-repeat,
        linear-gradient(135deg, #fff, #b8c4dc);
}

.exp.minus {
    background:
        linear-gradient(#123, #123) center / 5px 1px no-repeat,
        linear-gradient(135deg, #fff, #b8c4dc);
}

.caption {
    flex: 1;
    height: 21px;
    margin-left: 2px;
    padding-left: 2px;
    line-height: 21px;
}

.muted .caption {
    color: #8d8a85;
}

.selected .caption {
    background-color: #164fe8;
}

.dim .sort {
    opacity: 0.35;
}

/* Полосы прокрутки */
.vscroll,
.hscroll {
    display: flex;
    background: repeating-conic-gradient(#fff 0 25%, #d4d0c8 0 50%) 0 0 / 2px 2px;
}

.vscroll {
    flex-direction: column;
    width: 20px;
}

.hscroll {
    height: 20px;
}

.sb {
    display: flex;
    align-items: center;
    justify-content: center;
    width: 20px;
    height: 20px;
}

.sb svg {
    width: 10px;
    height: 10px;
}

.vscroll .thumb {
    height: 55px;
}

.vscroll .end {
    margin-top: auto;
}

.hscroll .thumb {
    width: 115px;
}

.hscroll .end {
    margin-left: auto;
}

.record-nav {
    display: flex;
    align-items: center;
    width: 102px;
    background-color: #d4d0c8;
}

.record-nav button {
    width: 17px;
}

.record-nav svg {
    width: 10px;
    height: 10px;
    margin: 0 auto;
    fill: #4c4944;
}

/* Панели с мелкими иконками */
.icon-bar {
    display: flex;
    flex: none;
    align-items: center;
    height: 37px;
    padding: 0 0 4px 0;
    background: linear-gradient(#f0ece6, #d4d0c8 45%, #b4afa7 90%);
}

.icon-bar button {
    width: 32px;
    height: 32px;
}

.icon-bar svg {
    width: 16px;
    height: 16px;
    margin: 0 auto;
}

.icon-bar .gap {
    margin-left: 8px;
}

.icon-bar .wide {
    margin-left: 12px;
}

.imdb {
    display: block;
    width: 16px;
    height: 15px;
    margin: 0 auto;
    background-color: #e0b800;
    font: bold 6px/15px "Liberation Sans", sans-serif;
    text-align: center;
}

/* Список файлов */
.tabs {
    display: flex;
    flex: none;
    height: 27px;
    background: linear-gradient(#f5f1eb, #b4afa7);
}

.tab {
    padding: 0 3px;
    border: 1px solid transparent;
}

.tab.active {
    background-color: #d4d0c8;
    border-color: #6f6a63;
}

.tabs.top {
    padding: 2px 0 0 5px;
    border-bottom: 1px solid #6f6a63;
}

.tabs.top .tab {
    border-bottom: none;
}

.tabs.bottom {
    padding: 0 0 4px 5px;
    border-top: 1px solid #6f6a63;
}

.tabs.bottom .active {
    border-top: none;
}

.tabs .split {
    border-left-color: #f5f1eb;
}

.list-box {
    flex: 1;
    min-height: 0;
    padding-top: 1px;
    overflow: hidden;
    background-color: #d4d0c8;
}

.c-name {
    width: 247px;
}

.c-genre {
    width: 110px;
}

.c-year {
    width: 74px;
}

.c-path {
    width: 234px;
}

.list th:last-child {
    text-align: left;
    padding-left: 2px;
}

.list td {
    height: 22px;
    background-color: #164fe8;
    border-right: 1px solid #808080;
    border-bottom: 1px solid #808080;
}

.list td.first {
    padding: 0;
    background-color: #d4d0c8;
}

.list td .stars {
    margin-left: 2px;
}

.list .sorted {
    padding-left: 18px;
}

.sorted svg {
    display: inline-block;
    width: 8px;
    height: 8px;
    margin: 0 0 2px 20px;
}

.file-name {
    display: flex;
    align-items: center;
    gap: 6px;
    padding-left: 3px;
}

.file-name span {
    display: flex;
    flex: 1;
    align-items: center;
    gap: 3px;
    height: 21px;
    padding-left: 1px;
    background-color: #164fe8;
}

/* Транскодирование */
.transcode {
    flex: 0 0 220px;
}

.job-box {
    flex: 1;
    background-color: #d4d0c8;
}

.j-state {
    width: 37px;
}

.j-info {
    width: 20px;
}

.j-name {
    width: 238px;
}

.j-src {
    width: 123px;
}

.j-speed {
    width: 144px;
}

.j-rate {
    width: 153px;
}

.j-frame {
    width: 130px;
}

.j-size {
    width: 132px;
}

.jobs td {
    height: 22px;
    background-color: #c8ffc8;
    border-right: 1px solid #808080;
    border-bottom: 1px solid #808080;
}

.jobs td.state {
    padding: 0;
    background: #d4d0c8 repeating-linear-gradient(90deg, #808080 0 1px, transparent 1px 2px) 8px 10px / 10px 1px no-repeat;
}

.state span {
    display: flex;
    align-items: center;
    justify-content: center;
    width: 18px;
    height: 21px;
    margin-left: auto;
    background-color: #0a246a;
}

.jobs .mid {
    padding: 0;
}

/* Боковая панель */
.sidebar {
    display: flex;
    flex-direction: column;
    align-items: center;
    width: 114px;
    background: linear-gradient(90deg, #f5f1eb, #ddd9d1 50%, #b3aea6);
}

.sidebar .grip {
    width: 104px;
    height: 2px;
    margin: 3px 0 5px 0;
    background: repeating-linear-gradient(90deg, #76716a 0 2px, transparent 2px 4px);
}

.sidebar hr {
    width: 107px;
    margin: 4px 0 3px 0;
    border: none;
    border-top: 1px solid #a8a49c;
    border-bottom: 1px solid #f5f1eb;
}

/* Строка состояния */
.statusbar {
    display: flex;
    gap: 2px;
    height: 28px;
    padding: 1px 0 3px 1px;
    background-color: #d4d0c8;
    border-top: 1px solid #f5f1eb;
}

.cell {
    display: flex;
    align-items: center;
    justify-content: center;
    border: 1px solid #a19c95;
    border-bottom: none;
    background: linear-gradient(#ebe7e1, #c2beb6);
}

.cell.fill {
    flex: 1;
}

.s-plug {
    width: 22px;
}

.s-wheel {
    width: 27px;
}

.wheel {
    width: 14px;
    height: 14px;
    border: 1px solid #555;
    border-radius: 50%;
    background: radial-gradient(#fff, transparent 50%), conic-gradient(#f0f, #f00, #ff0, #0f0, #0ff, #00f, #f0f);
}

.s-colors {
    width: 118px;
    justify-content: flex-start;
    overflow: hidden;
    background: #d4d0c8;
}

.s-colors span {
    display: flex;
    flex: none;
    align-items: center;
    gap: 4px;
    width: 51px;
    height: 22px;
    padding-left: 4px;
    border-right: 2px solid #808080;
}

.sw {
    width: 18px;
    height: 13px;
}

.sw.blue {
    background-color: #8fa6b7;
}

.sw.black {
    background-color: #000;
}

.sw.plain {
    border: 1px solid;
    border-color: #f5f1eb #a8a49c #a8a49c #f5f1eb;
}

.sw.grey {
    background-color: #a09b94;
}

.s-num {
    width: 102px;
}

.s-disc {
    width: 42px;
    justify-content: flex-end;
    gap: 5px;
}

.level {
    width: 12px;
    height: 16px;
    margin-bottom: 5px;
    background-color: #fff;
    border: 1px solid #808080;
}

.s-one {
    width: 32px;
}

.s-ver {
    width: 213px;
}
```
